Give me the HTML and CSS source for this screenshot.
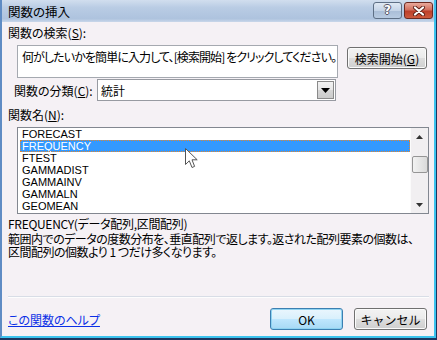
FILE: index.html
```html
<!DOCTYPE html>
<html lang="ja">
<head>
  <meta charset="UTF-8">
  <title>関数の挿入</title>
  <link rel="stylesheet" href="styles.css">
</head>
<body>

  <div class="window">
    <div class="titlebar">
      <span class="title">関数の挿入</span>
      <div class="caption-buttons">
        <span class="cap-btn help">?</span>
        <span class="cap-btn close">
          <svg width="14" height="10" viewBox="0 0 14 10">
            <path d="M3 1.5 L11 8.5 M11 1.5 L3 8.5" stroke="#5a2018" stroke-width="4" stroke-linecap="round"/>
            <path d="M3 1.5 L11 8.5 M11 1.5 L3 8.5" stroke="#fff" stroke-width="2.2" stroke-linecap="round"/>
          </svg>
        </span>
      </div>
    </div>

    <div class="content">
      <div class="label">関数の検索(<u>S</u>):</div>

      <div class="search-row">
        <div class="search-box">何がしたいかを簡単に入力して、[検索開始] をクリックしてください。</div>
        <button class="btn search-btn">検索開始(<u>G</u>)</button>
      </div>

      <div class="category-row">
        <span class="label category-label">関数の分類(<u>C</u>):</span>
        <div class="combo">
          <span class="combo-value">統計</span>
          <span class="combo-btn">
            <svg width="9" height="5" viewBox="0 0 9 5"><path d="M0 0 H9 L4.5 5 Z" fill="#000"/></svg>
          </span>
        </div>
      </div>

      <div class="label names-label">関数名(<u>N</u>):</div>

      <div class="listbox">
        <ul class="items">
          <li>FORECAST</li>
          <li class="selected">FREQUENCY</li>
          <li>FTEST</li>
          <li>GAMMADIST</li>
          <li>GAMMAINV</li>
          <li>GAMMALN</li>
          <li>GEOMEAN</li>
        </ul>
        <div class="scrollbar">
          <span class="arrow">
            <svg width="7" height="4" viewBox="0 0 7 4"><path d="M0 4 H7 L3.5 0 Z" fill="#333"/></svg>
          </span>
          <span class="thumb"></span>
          <span class="track"></span>
          <span class="arrow">
            <svg width="7" height="4" viewBox="0 0 7 4"><path d="M0 0 H7 L3.5 4 Z" fill="#333"/></svg>
          </span>
        </div>
        <!-- mouse pointer over the list -->
        <svg class="pointer" width="13" height="21" viewBox="0 0 13 21">
          <path d="M0.5 0.5 V16.5 L4.3 12.8 L7 19.5 L9.6 18.4 L7 11.8 H12.2 Z" fill="#fff" stroke="#555" stroke-width="1"/>
        </svg>
      </div>

      <div class="signature">FREQUENCY(データ配列,区間配列)</div>
      <p class="desc">範囲内でのデータの度数分布を、垂直配列で返します。返された配列要素の個数は、<br>区間配列の個数より 1 つだけ多くなります。</p>

      <div class="separator"></div>

      <div class="footer">
        <a class="help-link" href="#">この関数のヘルプ</a>
        <div class="actions">
          <button class="btn default">OK</button>
          <button class="btn">キャンセル</button>
        </div>
      </div>
    </div>
  </div>

</body>
</html>
```

FILE: styles.css
```css
body {
  margin: 0;
  background-color: #1c355f;
  font-family: "Noto Sans CJK JP", "Noto Sans", sans-serif;
  font-size: 12px;
  line-height: 13px;
  color: #000;
  font-feature-settings: "palt";
}
.window {
  width: 432px;
  height: 336px;
  display: flex;
  flex-direction: column;
  border-left: 2px solid #5f8cc4;
  border-right: 2px solid #3cc3ee;
  border-bottom: 2px solid #3cc3ee;
  background-color: #f5f1f5;
}
.titlebar {
  height: 22px;
  flex: none;
  display: flex;
  align-items: center;
  justify-content: space-between;
  padding: 0 1px 0 6px;
  background: linear-gradient(#d1deee 0%, #b9cce4 35%, #aec3de 85%, #c9d7ea 100%);
}
.title {
  font-size: 12.5px;
  padding-top: 1px;
}
.caption-buttons {
  display: flex;
  gap: 2px;
  margin-top: -1px;
}
.cap-btn {
  height: 15px;
  border: 1px solid #5e6f85;
  border-radius: 3px;
  display: flex;
  align-items: center;
  justify-content: center;
}
.help {
  width: 27px;
  background: linear-gradient(#dfe8f3 0%, #c5d4e7 50%, #a9bdd7 51%, #b8cbe2 100%);
  color: #fff;
  font-family: "DejaVu Sans", sans-serif;
  font-weight: bold;
  font-size: 12px;
  text-shadow: 1px 0 #556, -1px 0 #556, 0 1px #556, 0 -1px #556;
}
.close {
  width: 27px;
  border-color: #6b2a22;
  background: linear-gradient(#e9a99c 0%, #d2705f 45%, #bc3f2a 55%, #cd5a3e 100%);
}
.content {
  flex: 1;
  display: flex;
  flex-direction: column;
  padding: 4px 5px 0 6px;
}
.label {
  height: 13px;
}
u {
  text-decoration-thickness: 1px;
  text-underline-offset: 1px;
}
.search-row {
  display: flex;
  align-items: flex-start;
  margin-top: 6px;
  padding-left: 9px;
}
.search-box {
  width: 311px;
  height: 27px;
  padding: 4px 4px 0 4px;
  background-color: #fff;
  border: 1px solid #a5a9b0;
  white-space: nowrap;
  overflow: hidden;
  letter-spacing: -0.9px;
}
.btn {
  font-family: inherit;
  font-size: 12px;
  line-height: 13px;
  color: #000;
  height: 22px;
  padding: 0;
  border: 1px solid #707070;
  border-radius: 3px;
  background: linear-gradient(#f3f3f3 0%, #ebebeb 48%, #dddddd 52%, #cfcfcf 100%);
  box-shadow: inset 0 0 0 1px #fbfbfb;
}
.search-btn {
  width: 80px;
  margin-left: 9px;
  margin-top: 2px;
}
.category-row {
  display: flex;
  align-items: center;
  margin-top: 1px;
}
.category-label {
  width: 83px;
  padding-left: 6px;
}
.combo {
  width: 237px;
  height: 20px;
  display: flex;
  align-items: center;
  justify-content: space-between;
  background-color: #fff;
  border: 1px solid #979aa1;
}
.combo-value {
  padding-left: 3px;
}
.combo-btn {
  width: 15px;
  height: 16px;
  margin-right: 1px;
  display: flex;
  align-items: center;
  justify-content: center;
  border: 1px solid #8a8a8a;
  background: linear-gradient(#f2f2f2 0%, #e6e6e6 50%, #d6d6d6 51%, #cbcbcb 100%);
}
.names-label {
  margin-top: 7px;
}
.listbox {
  position: relative;
  display: flex;
  margin: 6px 0 0 9px;
  height: 85px;
  border: 1px solid #828790;
  background-color: #fff;
}
.items {
  list-style: none;
  margin: 0;
  padding: 0 0 0 2px;
  flex: 1;
  font-family: "Liberation Sans", Arial, sans-serif;
  font-size: 11px;
}
.items li {
  height: 12px;
  line-height: 12px;
  padding-left: 2px;
}
.items li.selected {
  background-color: #3399ff;
  color: #fff;
  outline: 1px dotted #e2862e;
  outline-offset: -1px;
}
.scrollbar {
  width: 17px;
  display: flex;
  flex-direction: column;
  align-items: center;
  background-color: #f1eff1;
  border-left: 1px solid #fbfbfb;
}
.scrollbar .arrow {
  height: 17px;
  width: 16px;
  display: flex;
  align-items: center;
  justify-content: center;
}
.scrollbar .thumb {
  margin-top: 11px;
  width: 14px;
  height: 15px;
  border: 1px solid #959595;
  border-radius: 2px;
  background: linear-gradient(90deg, #f2f2f2, #dadada);
}
.scrollbar .track {
  flex: 1;
}
.pointer {
  position: absolute;
  left: 167px;
  top: 20px;
}
.signature {
  margin-top: 3px;
  letter-spacing: -0.3px;
}
.desc {
  margin: 2px 0 0;
  white-space: nowrap;
  letter-spacing: -0.5px;
}
.separator {
  margin-top: auto;
  height: 1px;
  background-color: #d8dde6;
  border-bottom: 1px solid #fdfdfd;
}
.footer {
  display: flex;
  align-items: center;
  justify-content: space-between;
  margin-top: 10px;
  padding-bottom: 6px;
}
.help-link {
  color: #0a2fe6;
  text-decoration: underline;
  text-underline-offset: 1px;
}
.actions {
  display: flex;
  gap: 11px;
  margin-right: 2px;
}
.actions .btn {
  width: 73px;
}
.btn.default {
  border-color: #3c7fb1;
  box-shadow: inset 0 0 0 1px #8fd3f1;
  background: linear-gradient(#eaf6fd 0%, #d9f0fc 48%, #bee6fd 52%, #a7d9f5 100%);
}
```
